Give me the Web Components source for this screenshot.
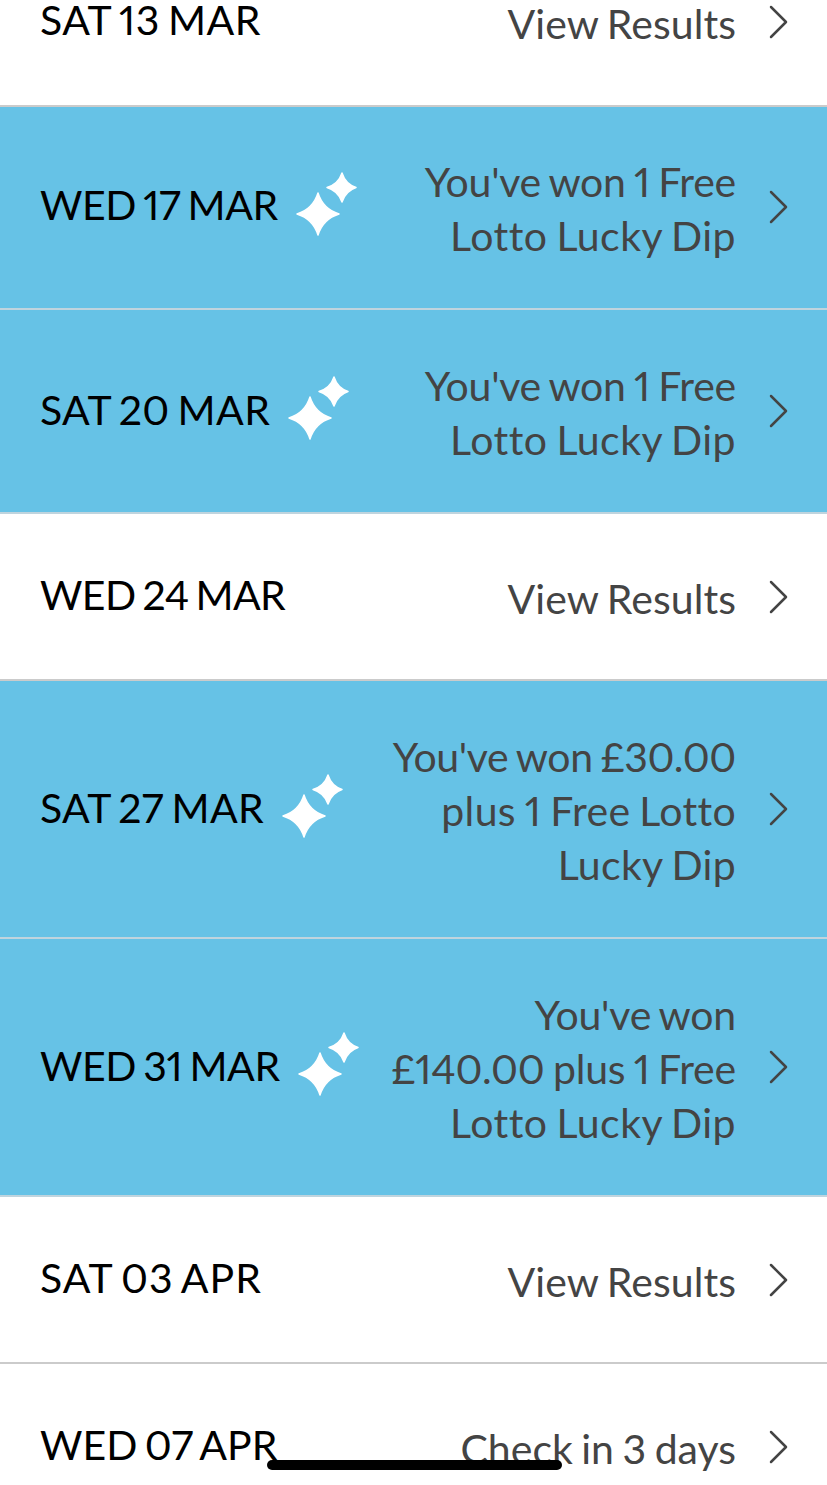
<!DOCTYPE html>
<html>
<head>
<meta charset="utf-8">
<style>
html, body { margin: 0; padding: 0; background: #fff; }
body { width: 827px; height: 1485px; overflow: hidden; font-family: Lato, sans-serif; }
draw-list { margin-top: -60px; }
.line { display: block; }
.view { letter-spacing: .07px; }
.lotto { letter-spacing: .47px; }
</style>
</head>
<body>
<draw-list>
  <draw-row date="SAT 13 MAR" style="--track:.5px;--pad-top:47px;--pad-bottom:47px"><span class="line view">View Results</span></draw-row>
  <draw-row date="WED 17 MAR" won style="--track:-.4px;height:203px;--pad-top:47px;--pad-bottom:47px;--sparkle-lift:6px">
    <span class="line" style="letter-spacing:-.25px">You've won 1 Free</span>
    <span class="line lotto">Lotto Lucky Dip</span>
  </draw-row>
  <draw-row date="SAT 20 MAR" won style="--track:.4px;height:204px">
    <span class="line" style="letter-spacing:-.25px">You've won 1 Free</span>
    <span class="line lotto">Lotto Lucky Dip</span>
  </draw-row>
  <draw-row date="WED 24 MAR" style="--track:-.6px"><span class="line view">View Results</span></draw-row>
  <draw-row date="SAT 27 MAR" won style="--track:.3px">
    <span class="line" style="letter-spacing:-.35px">You've won £30.00</span>
    <span class="line" style="letter-spacing:.35px">plus 1 Free Lotto</span>
    <span class="line" style="letter-spacing:.33px">Lucky Dip</span>
  </draw-row>
  <draw-row date="WED 31 MAR" won style="--track:-.4px">
    <span class="line" style="letter-spacing:-.2px">You've won</span>
    <span class="line" style="letter-spacing:-.2px">£140.00 plus 1 Free</span>
    <span class="line lotto">Lotto Lucky Dip</span>
  </draw-row>
  <draw-row date="SAT 03 APR" style="--track:1px"><span class="line view">View Results</span></draw-row>
  <draw-row date="WED 07 APR"><span class="line">Check in 3 days</span></draw-row>
</draw-list>
<home-bar></home-bar>

<script>
class DrawList extends HTMLElement {
  constructor() {
    super();
    this.attachShadow({ mode: "open" });
    this.shadowRoot.innerHTML = `
<style>
:host { display: flex; flex-direction: column; }
</style>
<slot></slot>`;
  }
}

const rowTemplate = document.createElement("template");
rowTemplate.innerHTML = `
<style>
:host {
  display: flex;
  align-items: center;
  box-sizing: border-box;
  min-height: 167px;
  padding: var(--pad-top, 48px) 38px var(--pad-bottom, 46px) 40px;
  border-bottom: 2px solid #cbcbcb;
  background: #fff;
  font-family: Lato, sans-serif;
  font-variant-numeric: proportional-nums;
}
:host([won]) {
  background: #66c2e6;
  border-bottom-color: #bfd4de;
}
.date {
  font-size: 41px;
  line-height: 54px;
  margin-bottom: 5px;
  color: #000;
  white-space: nowrap;
  word-spacing: -3px;
  letter-spacing: var(--track, 0);
}
.sparkle {
  display: none;
  width: 62px;
  height: 65px;
  margin: 0 0 var(--sparkle-lift, 8px) 18px;
  flex: none;
}
:host([won]) .sparkle { display: block; }
.result {
  flex: 1;
  margin: 1px 0 -1px;
  text-align: right;
  font-size: 41px;
  line-height: 54px;
  color: #444;
  white-space: nowrap;
  word-spacing: -2px;
}
.chevron {
  width: 20px;
  height: 34px;
  margin: 0 0 2px 33px;
  flex: none;
}
</style>
<span class="date"></span>
<svg class="sparkle" viewBox="0 0 62 65">
  <path fill="#fff" stroke="#fff" stroke-width="1.500" stroke-linejoin="round" d="M22 21 Q27 37 43 42 Q27 47 22 63 Q17 47 1 42 Q17 37 22 21Z"/>
  <path fill="#fff" stroke="#fff" stroke-width="1.500" stroke-linejoin="round" d="M46 1 Q49.500 12 60 15.500 Q49.500 19 46 30 Q42.500 19 31 15.500 Q42.500 12 46 1Z"/>
</svg>
<span class="result"><slot></slot></span>
<svg class="chevron" viewBox="0 0 20 34">
  <path fill="none" stroke="#444" stroke-width="2.500" stroke-linecap="round" stroke-linejoin="round" d="M2 2 L17 17 L2 32"/>
</svg>`;

class DrawRow extends HTMLElement {
  constructor() {
    super();
    this.attachShadow({ mode: "open" });
    this.shadowRoot.appendChild(rowTemplate.content.cloneNode(true));
    this.shadowRoot.querySelector(".date").textContent = this.getAttribute("date");
  }
}

class HomeBar extends HTMLElement {
  constructor() {
    super();
    this.attachShadow({ mode: "open" });
    this.shadowRoot.innerHTML = `
<style>
:host {
  position: fixed;
  left: 267px;
  top: 1460px;
  width: 295px;
  height: 10px;
  border-radius: 5px;
  background: #000;
}
</style>`;
  }
}

customElements.define("draw-list", DrawList);
customElements.define("draw-row", DrawRow);
customElements.define("home-bar", HomeBar);
</script>
</body>
</html>
